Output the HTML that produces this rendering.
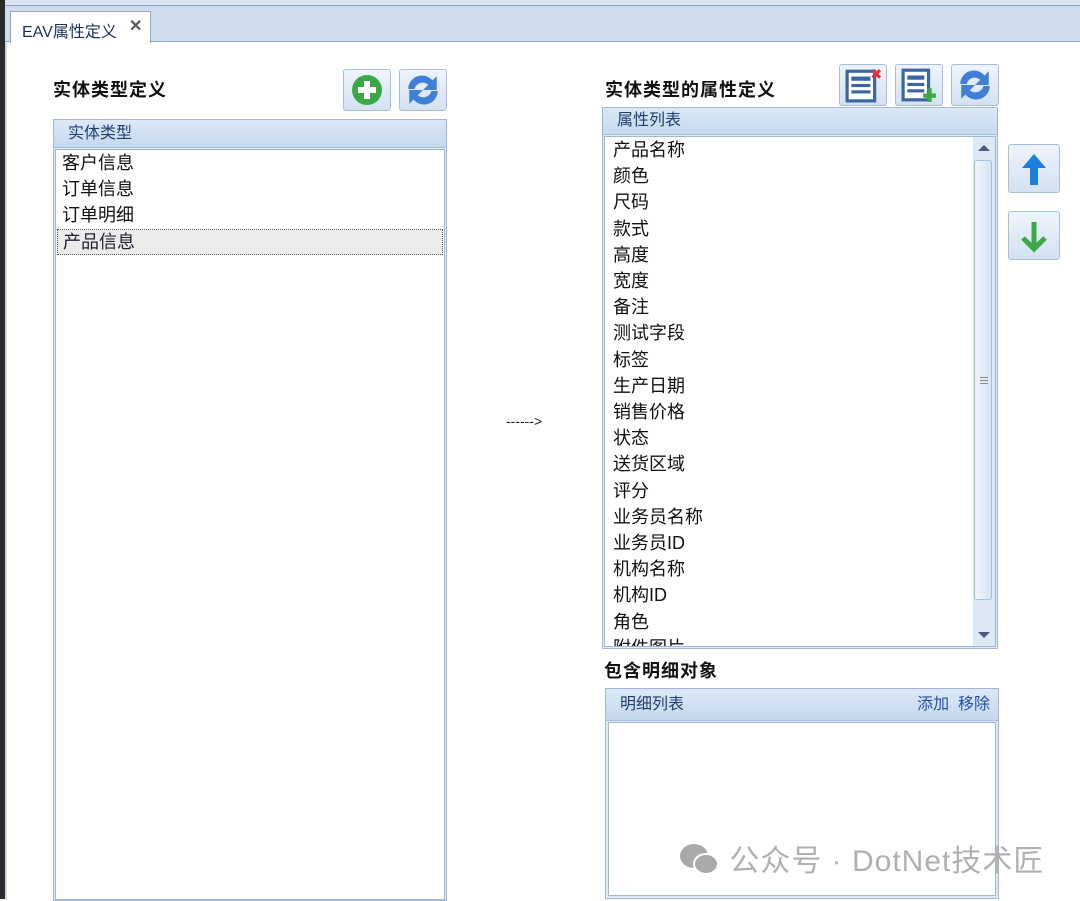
<!DOCTYPE html><html><head><meta charset="utf-8"><style>
*{margin:0;padding:0;box-sizing:border-box}
body{width:1080px;height:899px;overflow:hidden;background:#fff;font-family:"Liberation Sans","Noto Sans CJK SC",sans-serif;position:relative}
.a{position:absolute}
.btn{position:absolute;border:1px solid #a9bfd9;border-radius:3px;background:linear-gradient(#eef4fb,#d3e1f1);display:flex;align-items:center;justify-content:center}
.hdr{position:absolute;left:0;right:0;top:0;background:linear-gradient(#dce8f6,#c5d8ee);border-bottom:1px solid #a9bfd9;color:#1f3f6e;font-size:16px;padding-left:14px}
.box{position:absolute;border:1px solid #9fb6d4;background:#dfe9f5}
.inner{position:absolute;background:#fff;border:1px solid #9fb6d4}
.it{font-size:18px;line-height:26.2px;color:#111;padding-left:6px;white-space:nowrap}
.t{font-size:18px;font-weight:bold;color:#111;letter-spacing:1px}
</style></head><body>
<div class="a" style="left:0;top:0;width:1080px;height:6px;background:#dbe5f1;border-bottom:1px solid #8fa6c4"></div>
<div class="a" style="left:0;top:0;width:5px;height:899px;background:#2a2a2a"></div>
<div class="a" style="left:5px;top:6px;width:1075px;height:36px;background:#cfdcec;border-bottom:1px solid #93a9c8"></div>
<div class="a" style="left:10px;top:11px;width:141px;height:32px;background:#fff;border:1px solid #93a9c8;border-bottom:none;font-size:16px;color:#1b3156;padding:6px 0 0 11px">EAV属性定义<span style="position:absolute;left:118px;top:4px;color:#555;font-weight:bold;font-size:16px">✕</span></div>
<div class="a" style="left:5px;top:42px;width:2px;height:857px;background:#c9d6e8"></div>

<div class="a t" style="left:53px;top:76px">实体类型定义</div>
<div class="btn" style="left:343px;top:69px;width:48px;height:42px"><svg width="32" height="32" viewBox="0 0 32 32"><circle cx="16" cy="16" r="15" fill="#3aa845"/><rect x="13" y="7" width="6" height="18" fill="#fff"/><rect x="7" y="13" width="18" height="6" fill="#fff"/></svg></div>
<div class="btn" style="left:399px;top:69px;width:48px;height:42px"><svg width="38" height="36" viewBox="0 0 36 34"><path d="M4 16a13 13 0 0 1 23-8l4-4v13h-13l5-5a8 8 0 0 0-13 4z" fill="#3f7fd6"/><path d="M32 18a13 13 0 0 1-23 8l-4 4V17h13l-5 5a8 8 0 0 0 13-4z" fill="#3f7fd6"/></svg></div>

<div class="box" style="left:53px;top:119px;width:394px;height:782px">
<div class="hdr" style="height:28px;line-height:27px">实体类型</div>
<div class="inner" style="left:1px;top:29px;right:1px;bottom:0;padding-top:0">
<div class="it">客户信息</div><div class="it">订单信息</div><div class="it">订单明细</div>
<div class="it" style="background:#ebebeb;border:1px dotted #555;margin:0 1px;padding-left:5px;line-height:24px;color:#223">产品信息</div>
</div></div>

<div class="a" style="left:506px;top:413px;font-size:14px;color:#222">------&gt;</div>

<div class="a t" style="left:605px;top:76px">实体类型的属性定义</div>
<div class="btn" style="left:839px;top:64px;width:48px;height:42px"><svg width="40" height="36" viewBox="0 0 36 34"><rect x="3" y="4" width="26" height="28" fill="#fff" stroke="#3d64a5" stroke-width="3"/><rect x="7" y="9" width="18" height="4" fill="#3d64a5"/><rect x="7" y="16" width="18" height="3" fill="#3d64a5"/><rect x="7" y="22" width="18" height="3" fill="#3d64a5"/><path d="M27 3l7 7M34 3l-7 7" stroke="#e0303a" stroke-width="3"/></svg></div>
<div class="btn" style="left:895px;top:64px;width:48px;height:42px"><svg width="40" height="36" viewBox="0 0 36 34"><rect x="3" y="3" width="24" height="28" fill="#fff" stroke="#3d64a5" stroke-width="3"/><rect x="7" y="8" width="16" height="4" fill="#3d64a5"/><rect x="7" y="15" width="16" height="3" fill="#3d64a5"/><rect x="7" y="21" width="16" height="3" fill="#3d64a5"/><rect x="26" y="20" width="4" height="13" fill="#3aa845"/><rect x="22" y="25" width="12" height="4" fill="#3aa845"/></svg></div>
<div class="btn" style="left:951px;top:64px;width:48px;height:42px"><svg width="38" height="36" viewBox="0 0 36 34"><path d="M4 16a13 13 0 0 1 23-8l4-4v13h-13l5-5a8 8 0 0 0-13 4z" fill="#3f7fd6"/><path d="M32 18a13 13 0 0 1-23 8l-4 4V17h13l-5 5a8 8 0 0 0 13-4z" fill="#3f7fd6"/></svg></div>

<div class="box" style="left:602px;top:107px;width:396px;height:542px">
<div class="hdr" style="height:27px;line-height:26px">属性列表</div>
<div class="inner" style="left:1px;top:28px;right:1px;bottom:1px;overflow:hidden;padding-top:0;padding-left:2px">
<div class="it">产品名称</div><div class="it">颜色</div><div class="it">尺码</div><div class="it">款式</div><div class="it">高度</div><div class="it">宽度</div><div class="it">备注</div><div class="it">测试字段</div><div class="it">标签</div><div class="it">生产日期</div><div class="it">销售价格</div><div class="it">状态</div><div class="it">送货区域</div><div class="it">评分</div><div class="it">业务员名称</div><div class="it">业务员ID</div><div class="it">机构名称</div><div class="it">机构ID</div><div class="it">角色</div><div class="it">附件图片</div>
<div class="a" style="right:0;top:0;width:22px;height:100%;background:#dde8f5"></div>
<div class="a" style="right:3px;top:23px;width:18px;height:440px;border:1px solid #a9bfd9;border-radius:3px;background:linear-gradient(90deg,#eef4fb,#d6e3f2)"></div>
<div class="a" style="right:5px;top:8px;width:0;height:0;border:6px solid transparent;border-bottom:6px solid #4a5a78;border-top:none"></div>
<div class="a" style="right:5px;bottom:8px;width:0;height:0;border:6px solid transparent;border-top:6px solid #4a5a78;border-bottom:none"></div>
<div class="a" style="right:7px;top:240px;width:8px;height:7px;border-top:1px solid #888;border-bottom:1px solid #888"><div style="border-top:1px solid #888;margin-top:2px"></div></div>
</div></div>

<div class="btn" style="left:1008px;top:144px;width:52px;height:49px"><svg width="30" height="36" viewBox="0 0 30 36"><path d="M15 3L3 17h8v17h8V17h8z" fill="#1c7fe0"/></svg></div>
<div class="btn" style="left:1008px;top:211px;width:52px;height:49px"><svg width="30" height="36" viewBox="0 0 30 36"><path d="M15 4v26M4 20l11 11 11-11" stroke="#3aa845" stroke-width="5" fill="none"/></svg></div>

<div class="a t" style="left:604px;top:657px">包含明细对象</div>
<div class="box" style="left:605px;top:688px;width:394px;height:211px">
<div class="hdr" style="height:32px;line-height:32px">明细列表<span style="position:absolute;right:8px;color:#2451a8">添加&nbsp;&nbsp;移除</span></div>
<div class="inner" style="left:2px;top:33px;right:2px;bottom:2px"></div></div>

<div class="a" style="left:678px;top:836px;font-size:30px;color:#b0b0b0;white-space:nowrap;letter-spacing:1px"><span style="display:inline-block;width:42px;height:34px;position:relative;top:5px"><svg width="42" height="34" viewBox="0 0 42 34"><ellipse cx="16" cy="14" rx="14" ry="12" fill="#aaa"/><ellipse cx="28" cy="22" rx="12" ry="10" fill="#aaa" stroke="#fff" stroke-width="2"/></svg></span> 公众号 · DotNet技术匠</div>
</body></html>
